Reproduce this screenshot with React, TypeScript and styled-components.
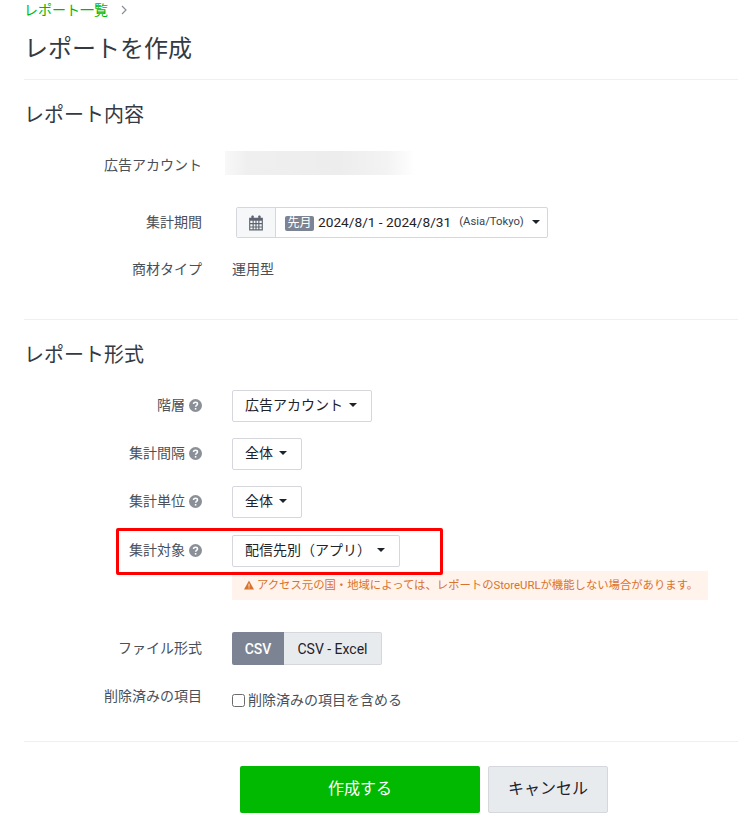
import React from "react";
import styled, { createGlobalStyle } from "styled-components";

const Global = createGlobalStyle`
  html, body { margin: 0; padding: 0; background: #fff; }
  body { font-family: Roboto, "Noto Sans CJK JP", sans-serif; color: #333a44; font-size: 14px; line-height: 20px; overflow: hidden; }
`;
const Page = styled.div`
  width: 738px; height: 821px; padding-left: 24px; box-sizing: border-box; overflow: hidden; position: relative;
`;
const Crumbs = styled.div`
  height: 20px; display: flex; align-items: center; gap: 12px; font-size: 14px; color: #00b900; line-height: 20px;
`;
const Title = styled.h1`
  margin: 11px 0 0; height: 36px; font-size: 24px; line-height: 36px; font-weight: 400; color: #333a44;
`;
const Rule = styled.hr<{ $top: number }>`
  margin: ${(p) => p.$top}px 0 0; border: 0; border-top: 1px solid #eeeff1; height: 0;
`;
const Heading = styled.h2`
  margin: 20px 0 0; height: 30px; font-size: 20px; line-height: 30px; font-weight: 400; color: #333a44;
`;
const Row = styled.div<{ $top: number; $h: number }>`
  display: grid; grid-template-columns: 178px 1fr; column-gap: 30px; align-items: center;
  margin-top: ${(p) => p.$top}px; height: ${(p) => p.$h}px;
`;
const Label = styled.div<{ $lift?: number; $drop?: number }>`
  display: flex; justify-content: flex-end; align-items: center; gap: 4px; font-size: 14px; color: #4a505a; white-space: nowrap;
  padding-bottom: ${(p) => p.$lift ?? 2}px;
  padding-top: ${(p) => p.$drop ?? 0}px;
`;
const Blurred = styled.div`
  width: 190px; height: 24px; margin-left: -7px;
  background: linear-gradient(90deg, #f8f8f8 0%, #efefef 12%, #ededed 60%, #f3f3f3 85%, #fff 100%);
`;
const Picker = styled.div`
  margin-left: 4px; width: 312px; height: 31px; box-sizing: border-box; display: flex; align-items: stretch;
  border: 1px solid #d5d7dd; border-radius: 2px;
`;
const PickerIcon = styled.div`
  width: 38px; background: #f6f7f9; border-right: 1px solid #d5d7dd; display: flex; align-items: center; justify-content: center; color: #5d6470;
`;
const PickerBody = styled.div`
  flex: 1; display: flex; align-items: center; padding-left: 9px; padding-bottom: 1px; font-size: 13.7px; color: #1e2229; white-space: nowrap;
`;
const Tag = styled.span`
  background: #7c8494; color: #fff; font-size: 12px; line-height: 15px; height: 15px; padding: 0 2.5px; border-radius: 2px; margin: 2px 4px 0 0;
`;
const Zone = styled.span`
  font-size: 11.3px; color: #3c424c; margin-left: 8px; margin-right: 8px;
`;
const Caret = styled.i`
  display: inline-block; flex-shrink: 0; width: 0; height: 0; border-left: 4px solid transparent; border-right: 4px solid transparent; border-top: 4px solid #1e2229;
`;
const Plain = styled.div`
  font-size: 14px; color: #4a505a; padding-bottom: 1px;
`;
const Dropdown = styled.button`
  height: 32px; padding: 0 14px 2px 12px; box-sizing: border-box; background: #fff; border: 1px solid #d5d7dd; border-radius: 2px;
  display: inline-flex; align-items: center; gap: 6px; font: inherit; font-size: 14px; color: #1e2229; white-space: nowrap;
`;
const Highlight = styled.div`
  position: absolute; left: 116px; top: 528px; width: 327px; height: 47px; box-sizing: border-box;
  border: 3px solid #f00; border-radius: 2px;
`;
const Warning = styled.div`
  margin: 4px 30px 0 208px; height: 29px; background: #fff3eb; color: #d9722c; font-size: 11.35px;
  display: flex; align-items: center; padding: 0 0 1px 12px; box-sizing: border-box; gap: 3px; white-space: nowrap;
`;
const WarnGlyph = styled.svg`
  flex-shrink: 0;
`;
const Segment = styled.div`
  display: inline-flex; height: 33px;
`;
const SegOn = styled.div`
  width: 52px; background: #7c8494; color: #fff; font-size: 14px; font-weight: 500; display: flex; align-items: center; justify-content: center; border-radius: 2px 0 0 2px;
`;
const SegOff = styled.div`
  width: 98px; box-sizing: border-box; background: #e8ebee; color: #1e2229; font-size: 14px; border: 1px solid #d5d7dd; border-left: 0; display: flex; align-items: center; justify-content: center; border-radius: 0 2px 2px 0;
`;
const Check = styled.label`
  display: flex; align-items: center; gap: 3px; font-size: 14px; color: #4a505a; margin-top: 8px;
`;
const Box = styled.span`
  width: 13px; height: 13px; box-sizing: border-box; border: 1px solid #6b6b6b; border-radius: 2.5px; background: #fff;
`;
const Actions = styled.div`
  display: flex; gap: 8px; margin: 24px 0 0 216px;
`;
const Primary = styled.button`
  width: 240px; height: 47px; padding: 0 0 2px; background: #00b900; color: #fff; border: 0; border-radius: 2px; font: inherit; font-size: 16px;
`;
const Secondary = styled.button`
  width: 120px; height: 47px; padding: 0 0 2px; box-sizing: border-box; background: #e8ebee; color: #1e2229; border: 1px solid #d5d7dd; border-radius: 2px; font: inherit; font-size: 16px;
`;

const Chevron = () => (
  <svg width="8" height="10" viewBox="0 0 8 10" fill="none" stroke="#8a8f98" strokeWidth="1.2"><path d="M2 1l4 4-4 4" /></svg>
);
const Help = () => (
  <svg width="13" height="13" viewBox="0 0 13 13"><circle cx="6.5" cy="6.5" r="6.5" fill="#8a8f98" /><path d="M4.5 5.100c0-1.200 1-1.800 2-1.800s2 .6 2 1.700c0 1.400-1.900 1.300-1.900 2.700" fill="none" stroke="#fff" strokeWidth="1.500" /><rect x="5.800" y="9" width="1.600" height="1.600" fill="#fff" /></svg>
);
const Calendar = () => (
  <svg width="16" height="16" viewBox="0 0 14 14" fill="currentColor"><rect x="3" y="0.500" width="2" height="3" rx=".6" /><rect x="9" y="0.500" width="2" height="3" rx=".6" /><path fillRule="evenodd" d="M1 2.500h12v11H1zM2 5v2h2V5zm3 0v2h1.500V5zm2.500 0v2H9V5zM10 5v2h2V5zM2 8v2h2V8zm3 0v2h1.500V8zm2.500 0v2H9V8zM10 8v2h2V8zM2 11v1.500h2V11zm3 0v1.500h1.500V11zm2.500 0v1.500H9V11zm2.500 0v1.500h2V11z" /></svg>
);
const Warn = () => (
  <WarnGlyph width="10" height="10" viewBox="0 0 11 10"><path d="M5.500 0L11 10H0z" fill="#d9722c" /><rect x="5" y="3.500" width="1" height="3.500" fill="#fff3eb" /><rect x="5" y="7.700" width="1" height="1.100" fill="#fff3eb" /></WarnGlyph>
);

export default function App() {
  return (
    <Page>
      <Global />
      <Crumbs>レポート一覧 <Chevron /></Crumbs>
      <Title>レポートを作成</Title>
      <Rule $top={12} />
      <Heading>レポート内容</Heading>
      <Row $top={21} $h={24}>
        <Label $lift={0} $drop={4}>広告アカウント</Label>
        <Blurred />
      </Row>
      <Row $top={32} $h={31}>
        <Label>集計期間</Label>
        <Picker>
          <PickerIcon><Calendar /></PickerIcon>
          <PickerBody><Tag>先月</Tag>2024/8/1 - 2024/8/31<Zone>(Asia/Tokyo)</Zone><Caret /></PickerBody>
        </Picker>
      </Row>
      <Row $top={20} $h={22}>
        <Label $lift={1}>商材タイプ</Label>
        <Plain>運用型</Plain>
      </Row>
      <Rule $top={39} />
      <Heading>レポート形式</Heading>
      <Row $top={20} $h={32}>
        <Label>階層 <Help /></Label>
        <div><Dropdown>広告アカウント <Caret /></Dropdown></div>
      </Row>
      <Row $top={16} $h={32}>
        <Label>集計間隔 <Help /></Label>
        <div><Dropdown>全体 <Caret /></Dropdown></div>
      </Row>
      <Row $top={16} $h={32}>
        <Label>集計単位 <Help /></Label>
        <div><Dropdown>全体 <Caret /></Dropdown></div>
      </Row>
      <Row $top={17} $h={32}>
        <Label>集計対象 <Help /></Label>
        <div><Dropdown>配信先別（アプリ） <Caret /></Dropdown></div>
      </Row>
      <Warning><Warn />アクセス元の国・地域によっては、レポートのStoreURLが機能しない場合があります。</Warning>
      <Row $top={32} $h={33}>
        <Label>ファイル形式</Label>
        <div><Segment><SegOn>CSV</SegOn><SegOff>CSV - Excel</SegOff></Segment></div>
      </Row>
      <Row $top={15} $h={32}>
        <Label $lift={1}>削除済みの項目</Label>
        <Check><Box />削除済みの項目を含める</Check>
      </Row>
      <Rule $top={29} />
      <Actions>
        <Primary>作成する</Primary>
        <Secondary>キャンセル</Secondary>
      </Actions>
      <Highlight />
    </Page>
  );
}
